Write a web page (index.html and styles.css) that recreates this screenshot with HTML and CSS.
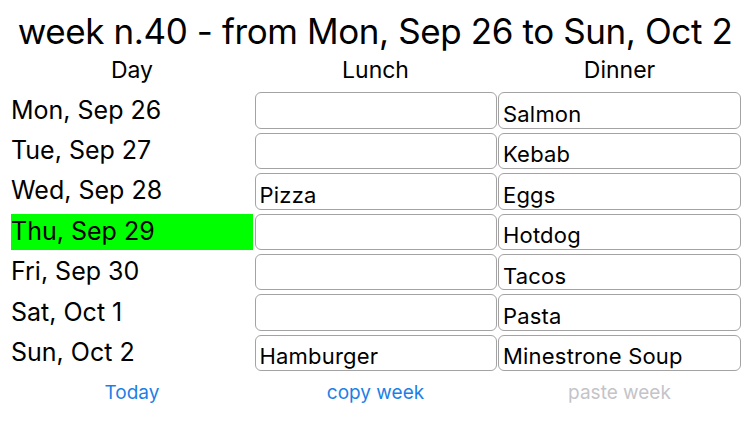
FILE: index.html
```html
<!DOCTYPE html>
<html lang="en">
<head>
<meta charset="utf-8">
<title>Week planner</title>
<link rel="stylesheet" href="styles.css">
</head>
<body>
<div class="page">
  <h1 class="title">week n.40 - from Mon, Sep 26 to Sun, Oct 2</h1>
  <div class="grid">
    <div class="head">Day</div>
    <div class="head">Lunch</div>
    <div class="head">Dinner</div>

    <div class="day">Mon, Sep 26</div>
    <div class="box"></div>
    <div class="box">Salmon</div>

    <div class="day">Tue, Sep 27</div>
    <div class="box"></div>
    <div class="box">Kebab</div>

    <div class="day">Wed, Sep 28</div>
    <div class="box">Pizza</div>
    <div class="box">Eggs</div>

    <div class="day today">Thu, Sep 29</div>
    <div class="box"></div>
    <div class="box">Hotdog</div>

    <div class="day">Fri, Sep 30</div>
    <div class="box"></div>
    <div class="box">Tacos</div>

    <div class="day">Sat, Oct 1</div>
    <div class="box"></div>
    <div class="box">Pasta</div>

    <div class="day">Sun, Oct 2</div>
    <div class="box">Hamburger</div>
    <div class="box">Minestrone Soup</div>

    <div class="btn">Today</div>
    <div class="btn">copy week</div>
    <div class="btn disabled">paste week</div>
  </div>
</div>
</body>
</html>
```

FILE: styles.css
```css
html, body {
  margin: 0;
  padding: 0;
  background: #ffffff;
}
body {
  font-family: Inter, "Liberation Sans", Arial, sans-serif;
  color: #000000;
}
.page {
  width: 750px;
  height: 422px;
  overflow: hidden;
}
.title {
  margin: 0;
  height: 52px;
  line-height: 62px;
  font-size: 35px;
  letter-spacing: -0.4px;
  font-weight: 400;
  text-align: center;
  white-space: nowrap;
}
.grid {
  display: grid;
  grid-template-columns: 242px 242px 243px;
  grid-auto-rows: 36.4px;
  column-gap: 1.5px;
  row-gap: 4px;
  padding: 0 9px 0 11px;
}
.head {
  font-size: 23px;
  text-align: center;
  line-height: 36px;
}
.day {
  font-size: 25px;
  display: flex;
  align-items: center;
  padding-bottom: 2px;
  box-sizing: border-box;
  white-space: nowrap;
}
.today {
  background: #00ff00;
}
.box {
  border: 1px solid #a3a3a3;
  border-radius: 6px;
  box-sizing: border-box;
  font-size: 22px;
  letter-spacing: 0.2px;
  display: flex;
  align-items: center;
  padding: 7px 0 0 4px;
  white-space: nowrap;
}
.btn {
  font-size: 19px;
  text-align: center;
  line-height: 36px;
  color: #1d7fe6;
}
.btn.disabled {
  color: #c4c4c8;
}
```
